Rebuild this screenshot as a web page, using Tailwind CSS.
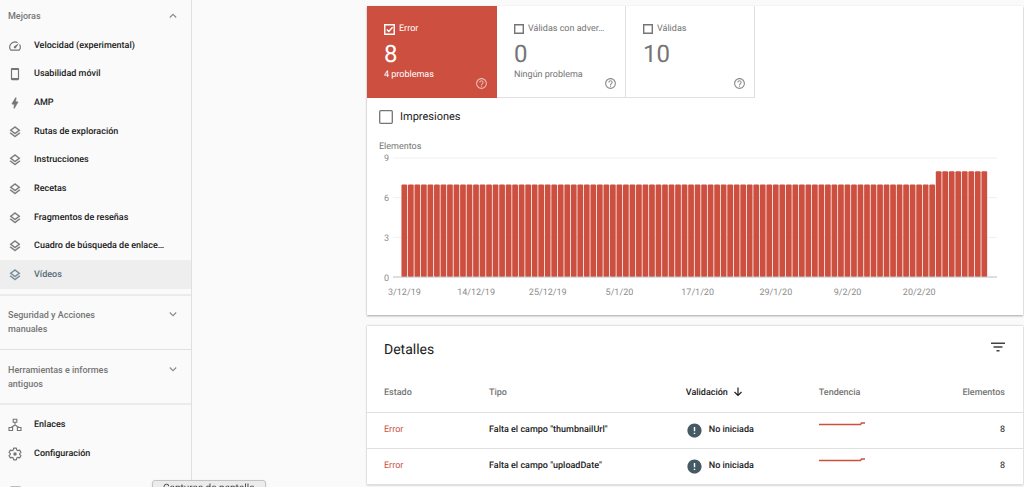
<!DOCTYPE html>
<html lang="es">
<head>
<meta charset="utf-8">
<meta name="viewport" content="width=device-width, initial-scale=1">
<title>Vídeos - Mejoras</title>
<script src="https://cdn.jsdelivr.net/npm/@tailwindcss/browser@4"></script>
</head>
<body class="h-screen overflow-hidden bg-[#fafafa] font-[Roboto,sans-serif] text-[9px] leading-[14px] text-[#757575] [text-rendering:geometricPrecision]">

<svg class="hidden" aria-hidden="true">
  <symbol id="speed" viewBox="0 0 24 24"><path d="M20.380 8.570l-1.230 1.850a8 8 0 0 1-.22 7.580H5.070A8 8 0 0 1 15.580 6.850l1.850-1.230A10 10 0 0 0 3.350 19a2 2 0 0 0 1.720 1h13.850a2 2 0 0 0 1.740-1 10 10 0 0 0-.27-10.440zm-9.790 6.840a2 2 0 0 0 2.830 0l5.660-8.490-8.490 5.660a2 2 0 0 0 0 2.830z"/></symbol>
  <symbol id="phone" viewBox="0 0 24 24"><path d="M17 1.500H7c-1.100 0-2 .9-2 2v17c0 1.100.9 2 2 2h10c1.100 0 2-.9 2-2v-17c0-1.100-.9-2-2-2zm0 17.500H7V5h10v14z"/></symbol>
  <symbol id="bolt" viewBox="0 0 24 24"><path stroke="currentColor" d="M11 21h-1l1-7H7.500c-.9 0-.8-.5-.5-1C8.400 10.500 10.400 7 13 3h1l-1 7h3.500c.6 0 .7.400.5.800C13 17.600 11 21 11 21z"/></symbol>
  <symbol id="layers" viewBox="0 0 24 24"><path stroke="currentColor" stroke-width=".4" d="M11.990 18.540l-7.370-5.730L3 14.070l9 7 9-7-1.630-1.270zM12 16l7.360-5.730L21 9l-9-7-9 7 1.630 1.270L12 16zm0-11.470L17.740 9 12 13.470 6.260 9 12 4.530z"/></symbol>
  <symbol id="help" viewBox="0 0 24 24"><path d="M11 18h2v-2h-2v2zm1-16C6.480 2 2 6.480 2 12s4.480 10 10 10 10-4.480 10-10S17.520 2 12 2zm0 18c-4.410 0-8-3.590-8-8s3.590-8 8-8 8 3.590 8 8-3.590 8-8 8zm0-14c-2.210 0-4 1.790-4 4h2c0-1.100.9-2 2-2s2 .9 2 2c0 2-3 1.750-3 5h2c0-2.250 3-2.500 3-5 0-2.210-1.790-4-4-4z"/></symbol>
  <symbol id="chevron" viewBox="0 0 12 12"><path d="M2.800 4.500L6 7.700l3.200-3.200" fill="none" stroke="#8c8c8c" stroke-width="1.200"/></symbol>
  <symbol id="box" viewBox="0 0 10 10"><path d="M.7.7h8.600v8.600H.7z" fill="none" stroke="currentColor" stroke-width="1.400"/></symbol>
  <symbol id="alert" viewBox="0 0 24 24"><path d="M12 2C6.480 2 2 6.480 2 12s4.480 10 10 10 10-4.480 10-10S17.520 2 12 2zm1 15h-2v-2h2v2zm0-4h-2V7h2v6z"/></symbol>
  <symbol id="trend" viewBox="0 0 46 6"><path d="M0 4.500H41.500L42.500 3H46" fill="none" stroke="#cc4f3f" stroke-width="1.400"/></symbol>
</svg>

<div class="flex h-full">
  <nav class="flex w-48 shrink-0 flex-col overflow-hidden border-r border-[#e0e0e0] font-medium text-[#212121]" aria-label="Principal">
    <button class="flex h-[31px] shrink-0 items-center justify-between pt-px pr-3 pl-2 text-left text-[#757575]">Mejoras
      <svg class="size-3 rotate-180"><use href="#chevron"/></svg></button>
    <div class="grid h-[258px] shrink-0 auto-rows-fr">
      <a href="#" class="flex items-center gap-3 pt-px pl-2"><svg class="size-[14px] fill-[#757575] text-[#757575]"><use href="#speed"/></svg>Velocidad (experimental)</a>
      <a href="#" class="flex items-center gap-3 pt-px pl-2"><svg class="size-[14px] fill-[#757575] text-[#757575]"><use href="#phone"/></svg>Usabilidad móvil</a>
      <a href="#" class="flex items-center gap-3 pt-px pl-2"><svg class="size-[14px] fill-[#757575] text-[#757575]"><use href="#bolt"/></svg>AMP</a>
      <a href="#" class="flex items-center gap-3 pt-px pl-2"><svg class="size-[14px] fill-[#757575] text-[#757575]"><use href="#layers"/></svg>Rutas de exploración</a>
      <a href="#" class="flex items-center gap-3 pt-px pl-2"><svg class="size-[14px] fill-[#757575] text-[#757575]"><use href="#layers"/></svg>Instrucciones</a>
      <a href="#" class="flex items-center gap-3 pt-px pl-2"><svg class="size-[14px] fill-[#757575] text-[#757575]"><use href="#layers"/></svg>Recetas</a>
      <a href="#" class="flex items-center gap-3 pt-px pl-2"><svg class="size-[14px] fill-[#757575] text-[#757575]"><use href="#layers"/></svg>Fragmentos de reseñas</a>
      <a href="#" class="flex items-center gap-3 pt-px pl-2"><svg class="size-[14px] fill-[#757575] text-[#757575]"><use href="#layers"/></svg>Cuadro de búsqueda de enlace…</a>
      <a href="#" class="flex items-center gap-3 bg-[#eeeeee] pt-px pl-2 text-[#546e7a]" aria-current="page"><svg class="size-[14px] fill-[#6d8796] text-[#6d8796]"><use href="#layers"/></svg>Vídeos</a>
    </div>
    <button class="mt-[5px] flex h-[55px] shrink-0 items-start justify-between border-t-2 border-[#ebebeb] pt-3 pr-3 pl-2 text-left text-[#757575]"><span class="w-28">Seguridad y Acciones manuales</span>
      <svg class="size-3"><use href="#chevron"/></svg></button>
    <button class="flex h-[54px] shrink-0 items-start justify-between border-t border-[#e0e0e0] pt-[13px] pr-3 pl-2 text-left text-[#757575]"><span class="w-28">Herramientas e informes antiguos</span>
      <svg class="size-3"><use href="#chevron"/></svg></button>
    <div class="grid shrink-0 auto-rows-[29px] border-t-2 border-[#ebebeb] pt-[5px]">
      <a href="#" class="flex items-center gap-3 pl-2"><svg class="size-[14px] text-[#757575]" viewBox="0 0 14 14" fill="none" stroke="currentColor" stroke-width="1.100"><path d="M5.200 1.200h3.600v3H5.200zM1 9.500h3.600v3H1zM9.400 9.500H13v3H9.400zM7 4.200V7M3 9.500L7 7l4 2.500"/></svg>Enlaces</a>
      <a href="#" class="flex items-center gap-3 pl-2"><svg class="size-[14px] text-[#757575]" viewBox="0 0 24 24"><path fill="none" stroke="currentColor" stroke-width="2" stroke-linejoin="round" d="M9.700 2h4.600l.6 3.100 2.100 1.200 3-1 2.300 4-2.400 2v1.400l2.400 2-2.300 4-3-1-2.100 1.200-.6 3.100H9.700l-.6-3.100L7 17.700l-3 1-2.300-4 2.400-2v-1.400l-2.400-2 2.300-4 3 1 2.100-1.200z"/><circle cx="12" cy="12" r="3" fill="currentColor"/></svg>Configuración</a>
      <a href="#" class="pt-[18px] pl-[10px]" aria-label="Enviar comentarios"><svg class="h-2 w-[11px] fill-[#bdbdbd]" viewBox="0 0 11 8"><path d="M1 0h9l1 1v7H0V1z"/></svg></a>
    </div>
  </nav>

  <main class="ml-[175px] flex min-w-0 flex-1 flex-col gap-[11px] pt-[6px] pr-px">
    <section class="shrink-0 bg-white pb-[7px] shadow-[0_1px_2px_rgba(0,0,0,0.35)]">
      <div class="flex h-[92px]">
        <div class="flex w-[130px] flex-col bg-[#cc4f3f] pt-4 pr-[9px] pl-[17px] text-white">
          <label class="flex items-center gap-1"><input type="checkbox" checked class="sr-only"><svg class="size-[11px] shrink-0" viewBox="0 0 10 10" fill="none" stroke="currentColor" stroke-width="1.300"><path d="M.7.7h8.600v8.600H.7zM2.500 5l1.800 1.800L7.800 3"/></svg><span>Error</span></label>
          <strong class="mt-1 text-2xl leading-7 font-normal">8</strong>
          <span>4 problemas</span>
          <button class="-mt-[5px] self-end" aria-label="Ayuda"><svg class="size-[13px] fill-white/60"><use href="#help"/></svg></button>
        </div>
        <div class="flex w-[129px] flex-col border-r border-b border-[#e0e0e0] pt-4 pr-2 pl-[17px]">
          <label class="flex items-center gap-1"><input type="checkbox" class="sr-only"><svg class="size-[10px] shrink-0"><use href="#box"/></svg><span>Válidas con adver…</span></label>
          <strong class="mt-1 text-2xl leading-7 font-normal">0</strong>
          <span>Ningún problema</span>
          <button class="-mt-[5px] self-end" aria-label="Ayuda"><svg class="size-[13px] fill-[#8c8c8c]"><use href="#help"/></svg></button>
        </div>
        <div class="flex w-[129px] flex-col border-r border-b border-[#e0e0e0] pt-4 pr-2 pl-[17px]">
          <label class="flex items-center gap-1"><input type="checkbox" class="sr-only"><svg class="size-[10px] shrink-0"><use href="#box"/></svg><span>Válidas</span></label>
          <strong class="mt-1 text-2xl leading-7 font-normal">10</strong>
          <button class="mt-[9px] self-end" aria-label="Ayuda"><svg class="size-[13px] fill-[#8c8c8c]"><use href="#help"/></svg></button>
        </div>
      </div>
      <label class="mt-[11px] flex w-max items-center gap-[7px] pl-3 text-[11px] leading-4 text-[#212121]"><input type="checkbox" class="sr-only"><svg class="size-[14px] text-[#757575]" viewBox="0 0 14 14" fill="none" stroke="currentColor" stroke-width="1.300"><rect x=".7" y=".7" width="12.600" height="12.600" rx="1"/></svg>Impresiones</label>
      <h3 class="mt-[15px] pl-3 leading-[14px]">Elementos</h3>
      <div class="flex pr-[26px]">
        <svg class="h-[154px] w-[26px] shrink-0 fill-[#8c8c8c]" text-anchor="end">
          <text x="22" y="7">9</text><text x="22" y="47">6</text><text x="22" y="87">3</text><text x="22" y="127">0</text>
        </svg>
        <svg id="chart" class="h-[154px] min-w-0 flex-1 overflow-visible fill-[#8c8c8c]" text-anchor="middle" role="img" aria-label="Elementos con error por día"></svg>
      </div>
    </section>

    <section class="shrink-0 bg-white shadow-[0_0_2px_rgba(0,0,0,0.3)]">
      <header class="flex h-[46px] items-center justify-between pt-[2px] pr-[18px] pl-[17px]">
        <h2 class="text-[14px] leading-5 text-[#212121]">Detalles</h2>
        <button class="mb-[6px]" aria-label="Filtrar"><svg class="h-[10px] w-[14px]" viewBox="0 0 14 10" fill="none" stroke="#424242" stroke-width="1.400"><path d="M0 1.200h14M2.500 5h9M5.500 8.800h3"/></svg></button>
      </header>
      <table class="w-full table-fixed border-collapse text-left text-[#212121]">
        <colgroup><col class="w-[122px]"><col class="w-[30%]"><col class="w-[133px]"><col class="w-[15%]"><col></colgroup>
        <thead class="text-[#757575]">
          <tr class="h-10 border-b border-[#e0e0e0]">
            <th class="pt-[2px] pl-[17px] font-medium">Estado</th><th class="pt-[2px] font-medium">Tipo</th>
            <th class="pt-[2px] font-medium text-[#212121]"><span class="flex items-center gap-1">Validación <svg class="mb-[2px] size-3" viewBox="0 0 12 12" fill="none" stroke="currentColor" stroke-width="1.200"><path d="M6 1.500v8M2.500 6L6 9.500 9.500 6"/></svg></span></th>
            <th class="pt-[2px] font-medium">Tendencia</th><th class="pt-[2px] pr-[18px] text-right font-medium">Elementos</th>
          </tr>
        </thead>
        <tbody>
          <tr class="h-9 border-b border-[#e0e0e0]">
            <td class="pl-[17px] text-[#cc4f3f]">Error</td><td class="font-medium">Falta el campo "thumbnailUrl"</td>
            <td class="font-medium"><span class="flex items-center gap-[6px]"><svg class="size-[17px] fill-[#455a64]"><use href="#alert"/></svg>No iniciada</span></td>
            <td><svg class="mb-[14px] h-[6px] w-[46px]"><use href="#trend"/></svg></td><td class="pr-[18px] text-right">8</td>
          </tr>
          <tr class="h-9 border-b border-[#e0e0e0]">
            <td class="pl-[17px] text-[#cc4f3f]">Error</td><td class="font-medium">Falta el campo "uploadDate"</td>
            <td class="font-medium"><span class="flex items-center gap-[6px]"><svg class="size-[17px] fill-[#455a64]"><use href="#alert"/></svg>No iniciada</span></td>
            <td><svg class="mb-[14px] h-[6px] w-[46px]"><use href="#trend"/></svg></td><td class="pr-[18px] text-right">8</td>
          </tr>
        </tbody>
      </table>
    </section>
  </main>
</div>

<div class="fixed top-[480px] left-[152px] rounded-[3px] border border-[#c4c4c4] bg-[#ececec] px-[10px] pt-px text-[10px] leading-[14px] text-[#424242] shadow" role="tooltip">Capturas de pantalla</div>

<script>
  // 90 daily bars: 7 errors per day, then 8 on the last 8 days.
  const days = 90, top0 = 4, base = 123, unit = (base - top0) / 9;
  const left = 1.4, step = (98.5 - left) / days;
  let out = '';
  for (const v of [3, 6, 9]) {
    const y = base - v * unit;
    out += `<line x1="0" x2="100%" y1="${y}" y2="${y}" stroke="#f0f0f0"/>`;
  }
  for (let i = 0; i < days; i++) {
    const h = (i < days - 8 ? 7 : 8) * unit;
    out += `<rect x="${left + i * step}%" y="${base - h}" width="${step * 0.88}%" height="${h}" rx="1" fill="#cc4f3f"/>`;
  }
  out += `<line x1="0" x2="100%" y1="${base}" y2="${base}" stroke="#bdbdbd"/>`;
  const labels = { 0: '3/12/19', 11: '14/12/19', 22: '25/12/19', 33: '5/1/20', 45: '17/1/20', 57: '29/1/20', 68: '9/2/20', 79: '20/2/20' };
  for (const [i, t] of Object.entries(labels)) {
    out += `<text x="${left + (Number(i) + 0.45) * step}%" y="141">${t}</text>`;
  }
  document.getElementById('chart').innerHTML = out;
</script>
</body>
</html>
